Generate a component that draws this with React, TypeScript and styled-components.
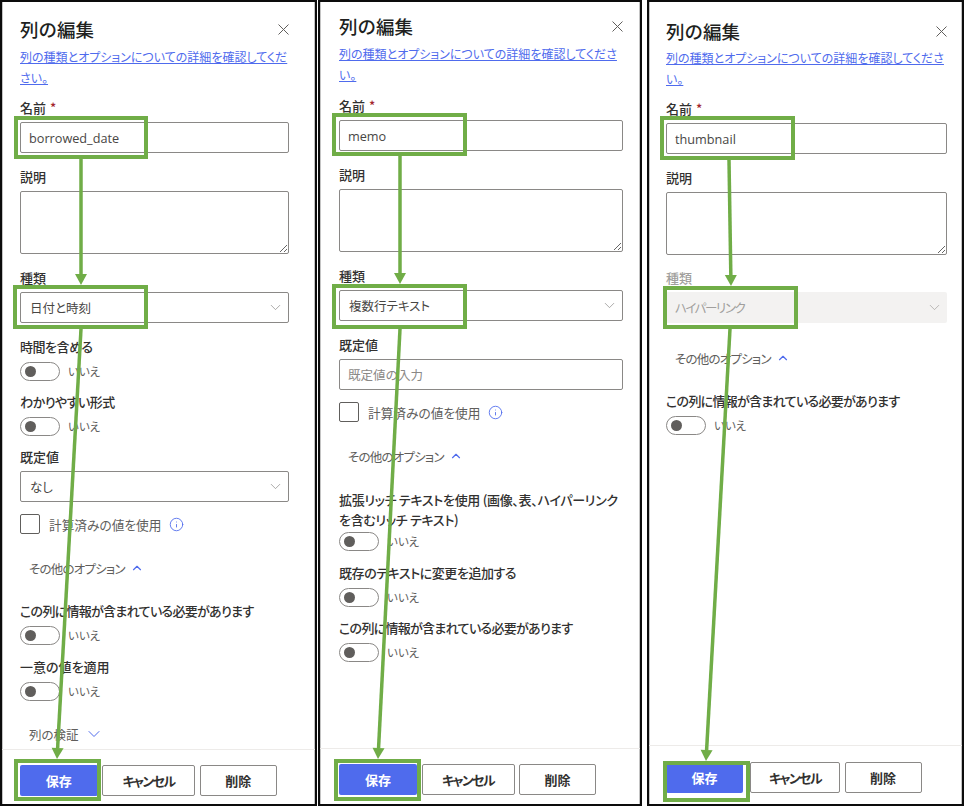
import React from "react";
import styled, { createGlobalStyle } from "styled-components";
import { ChevronDown, ChevronUp, Info } from "lucide-react";

const Global = createGlobalStyle`
  html, body { margin: 0; padding: 0; background: #fff; }
  * { box-sizing: border-box; }
  body {
    font-family: "Noto Sans CJK JP", "Open Sans", sans-serif;
    font-feature-settings: "palt";
    color: #323130;
  }
`;

const Page = styled.div`
  position: relative;
  width: 964px;
  height: 806px;
  display: flex;
  overflow: hidden;
  background: #fff;
`;

const Panel = styled.section<{ $w: number; $gap: number; $pl: number; $pr: number; $pt: number }>`
  width: ${(p) => p.$w}px;
  margin-left: ${(p) => p.$gap}px;
  height: 806px;
  border: 2px solid #0c0c0c;
  box-shadow: inset 1px 0 #c4c4c4, inset -1px 0 #c4c4c4;
  display: flex;
  flex-direction: column;
  padding-top: ${(p) => p.$pt}px;
  --pl: ${(p) => p.$pl}px;
  --pr: ${(p) => p.$pr}px;
`;

const Body = styled.div`
  flex: 1;
  min-height: 0;
  overflow: hidden;
  padding: 0 var(--pr) 0 var(--pl);
`;

const Header = styled.header`
  display: flex;
  align-items: center;
  justify-content: space-between;
  height: 26px;
`;

const Title = styled.h2`
  margin: 0;
  font-size: 18.5px;
  line-height: 26px;
  font-weight: 500;
  color: #201f1e;
  font-feature-settings: normal;
`;

const Close = styled.svg`
  width: 11px;
  height: 11px;
  stroke: #605e5c;
  stroke-width: 1;
  fill: none;
`;

const DocLink = styled.a<{ $mt: number }>`
  display: block;
  margin-top: ${(p) => p.$mt}px;
  font-size: 12px;
  line-height: 20.5px;
  color: #4f6bed;
  text-decoration: underline;
`;

const Label = styled.label<{ $mt?: number; $off?: boolean; $ls?: number }>`
  display: block;
  margin-top: ${(p) => p.$mt ?? 16}px;
  font-size: 13px;
  line-height: 16px;
  font-weight: 500;
  letter-spacing: ${(p) => p.$ls ?? 0}px;
  white-space: nowrap;
  color: ${(p) => (p.$off ? "#a19f9d" : "#323130")};
`;

const TallLabel = styled(Label)`
  line-height: 20px;
`;

const Req = styled.span`
  color: #a4262c;
  margin-left: 4px;
`;

const Input = styled.input`
  display: block;
  width: 100%;
  height: 31px;
  margin-top: 6px;
  padding: 0 8px;
  border: 1.5px solid #8a8886;
  border-radius: 2px;
  background: #fff;
  font-family: "Open Sans", "Noto Sans CJK JP", sans-serif;
  font-size: 12.7px;
  color: #484644;
  outline: none;
  &::placeholder {
    font-family: "Noto Sans CJK JP", sans-serif;
    font-size: 12.5px;
    color: #8a8886;
  }
`;

const Area = styled.textarea`
  display: block;
  width: 100%;
  height: 63px;
  margin: 6px 0 0;
  border: 1.5px solid #8a8886;
  border-radius: 2px;
  background: #fff;
  outline: none;
`;

const Select = styled.div<{ $off?: boolean }>`
  display: flex;
  align-items: center;
  justify-content: space-between;
  height: 31px;
  margin-top: 6px;
  padding: 0 4px 0 9px;
  border: ${(p) => (p.$off ? "none" : "1.5px solid #8a8886")};
  border-radius: 2px;
  background: ${(p) => (p.$off ? "#f3f2f1" : "#fff")};
  font-size: 12.5px;
  letter-spacing: ${(p) => (p.$off ? "-1.4px" : "0")};
  color: ${(p) => (p.$off ? "#a19f9d" : "#484644")};
  svg { color: ${(p) => (p.$off ? "#a19f9d" : "#8a8886")}; }
`;

const ToggleRow = styled.div<{ $mt?: number }>`
  display: flex;
  align-items: center;
  gap: 8px;
  height: 19px;
  margin-top: ${(p) => p.$mt ?? 7}px;
  font-size: 11.5px;
  color: #605e5c;
`;

const ToggleText = styled.span`
  margin-bottom: 2px;
`;

const Track = styled.span`
  display: flex;
  align-items: center;
  width: 40px;
  height: 19px;
  padding-left: 4px;
  border: 1.5px solid #8a8886;
  border-radius: 10px;
  background: #fff;
`;

const Knob = styled.span`
  width: 11px;
  height: 11px;
  border-radius: 50%;
  background: #605e5c;
`;

const CheckRow = styled.div<{ $mt: number }>`
  display: flex;
  align-items: center;
  margin-top: ${(p) => p.$mt}px;
  height: 20px;
  font-size: 12.7px;
  color: #605e5c;
  svg { color: #4f6bed; margin-left: 8px; }
`;

const Box = styled.span`
  width: 20px;
  height: 20px;
  margin-right: 9px;
  border: 1.5px solid #605e5c;
  border-radius: 2px;
`;

const Expander = styled.div<{ $mt: number; $ls?: number }>`
  display: flex;
  align-items: center;
  gap: 5px;
  height: 20px;
  margin-top: ${(p) => p.$mt}px;
  padding-left: 9px;
  font-size: 12.5px;
  letter-spacing: ${(p) => p.$ls ?? 0}px;
  color: #605e5c;
  svg { color: #4f6bed; }
`;

const Footer = styled.footer<{ $pt: number; $h: number }>`
  height: ${(p) => p.$h}px;
  flex: none;
  display: flex;
  gap: 4.5px;
  padding: ${(p) => p.$pt}px 0 0 var(--pl);
  border-top: 1px solid #edebe9;
`;

const Btn = styled.button<{ $w: number; $primary?: boolean; $ls?: number; $ml?: number }>`
  width: ${(p) => p.$w}px;
  height: 31px;
  margin-left: ${(p) => p.$ml ?? 0}px;
  border-radius: 2px;
  border: ${(p) => (p.$primary ? "none" : "1.5px solid #8a8886")};
  background: ${(p) => (p.$primary ? "#4f6bed" : "#fff")};
  color: ${(p) => (p.$primary ? "#fff" : "#323130")};
  font-family: inherit;
  font-feature-settings: "palt";
  font-size: 13px;
  font-weight: 700;
  letter-spacing: ${(p) => p.$ls ?? 0}px;
  padding: 0;
`;

const Overlay = styled.svg`
  position: absolute;
  left: 0;
  top: 0;
  width: 964px;
  height: 806px;
  pointer-events: none;
`;

const Toggle = ({ mt }: { mt?: number }) => (
  <ToggleRow $mt={mt}>
    <Track><Knob /></Track>
    <ToggleText>いいえ</ToggleText>
  </ToggleRow>
);

const Head = () => (
  <Header>
    <Title>列の編集</Title>
    <Close viewBox="0 0 11 11"><path d="M.5.5l10 10M10.5.5l-10 10" /></Close>
  </Header>
);

const Chev = () => <ChevronDown size={17} strokeWidth={1} />;
const Down = () => <ChevronDown size={20} strokeWidth={1.2} />;
const Up = () => <ChevronUp size={14} strokeWidth={2} />;
const LinkText = "列の種類とオプションについての詳細を確認してください。";

const Boxes: [number, number, number, number][] = [
  [16, 118, 130, 39], [15, 287, 131, 40], [16, 761, 83, 38],
  [334, 115, 131, 39], [334, 286, 131, 41], [336, 761, 83, 38],
  [662, 118, 131, 40], [665, 288, 131, 39], [665, 763, 83, 37],
];
const Lines: [number, number, number, number][] = [
  [81, 159, 81, 285], [81, 329, 57, 759],
  [400, 156, 400, 284], [400, 329, 378, 759],
  [729, 160, 731, 286], [730, 329, 706, 761],
];

export default function App() {
  return (
    <Page>
      <Global />
      <Panel $w={317} $gap={0} $pl={18} $pr={26} $pt={14}>
        <Body>
          <Head />
          <DocLink $mt={5}>{LinkText}</DocLink>
          <Label $mt={12}>名前<Req>*</Req></Label>
          <Input defaultValue="borrowed_date" />
          <Label>説明</Label>
          <Area />
          <Label>種類</Label>
          <Select>日付と時刻<Chev /></Select>
          <Label $ls={-0.5}>時間を含める</Label>
          <Toggle />
          <Label $mt={13} $ls={-0.5}>わかりやすい形式</Label>
          <Toggle />
          <Label $mt={13}>既定値</Label>
          <Select>なし<Chev /></Select>
          <CheckRow $mt={12}><Box />計算済みの値を使用<Info size={15} strokeWidth={1.4} /></CheckRow>
          <Expander $mt={24} $ls={-0.8}>その他のオプション<Up /></Expander>
          <Label $mt={25} $ls={-0.7}>この列に情報が含まれている必要があります</Label>
          <Toggle />
          <Label $mt={14}>一意の値を適用</Label>
          <Toggle />
          <Expander $mt={23}>列の検証<Down /></Expander>
        </Body>
        <Footer $pt={15} $h={55}>
          <Btn $primary $w={77.5}>保存</Btn>
          <Btn $w={93} $ls={-1.6}>キャンセル</Btn>
          <Btn $w={77.5}>削除</Btn>
        </Footer>
      </Panel>

      <Panel $w={324} $gap={1} $pl={19} $pr={17} $pt={11}>
        <Body>
          <Head />
          <DocLink $mt={5}>{LinkText}</DocLink>
          <Label $mt={13}>名前<Req>*</Req></Label>
          <Input defaultValue="memo" />
          <Label>説明</Label>
          <Area />
          <Label>種類</Label>
          <Select>複数行テキスト<Chev /></Select>
          <Label>既定値</Label>
          <Input placeholder="既定値の入力" />
          <CheckRow $mt={12}><Box />計算済みの値を使用<Info size={15} strokeWidth={1.4} /></CheckRow>
          <Expander $mt={24} $ls={-0.8}>その他のオプション<Up /></Expander>
          <TallLabel $mt={24} $ls={-0.3}>拡張リッチ テキストを使用 (画像、表、ハイパーリンク<br />を含むリッチ テキスト)</TallLabel>
          <Toggle mt={2} />
          <Label $mt={14} $ls={-0.45}>既存のテキストに変更を追加する</Label>
          <Toggle />
          <Label $mt={13} $ls={-0.7}>この列に情報が含まれている必要があります</Label>
          <Toggle />
        </Body>
        <Footer $pt={15} $h={56}>
          <Btn $primary $w={78}>保存</Btn>
          <Btn $w={93} $ls={-1.6}>キャンセル</Btn>
          <Btn $w={77}>削除</Btn>
        </Footer>
      </Panel>

      <Panel $w={317} $gap={5} $pl={17} $pr={15} $pt={16}>
        <Body>
          <Head />
          <DocLink $mt={4}>{LinkText}</DocLink>
          <Label $mt={12}>名前<Req>*</Req></Label>
          <Input defaultValue="thumbnail" />
          <Label>説明</Label>
          <Area />
          <Label $mt={15} $off>種類</Label>
          <Select $off>ハイパーリンク<Chev /></Select>
          <Expander $mt={25} $ls={-0.8}>その他のオプション<Up /></Expander>
          <Label $mt={25} $ls={-0.7}>この列に情報が含まれている必要があります</Label>
          <Toggle />
        </Body>
        <Footer $pt={16} $h={59}>
          <Btn $primary $w={77}>保存</Btn>
          <Btn $w={90} $ls={-1.6} $ml={2.5}>キャンセル</Btn>
          <Btn $w={77}>削除</Btn>
        </Footer>
      </Panel>

      <Overlay viewBox="0 0 964 806">
        {Boxes.map(([x, y, w, h]) => (
          <rect key={`${x}-${y}`} x={x} y={y} width={w} height={h} fill="none" stroke="#70ad47" strokeWidth={4} />
        ))}
        {Lines.map(([x1, y1, x2, y2]) => {
          const len = Math.hypot(x2 - x1, y2 - y1);
          const ux = (x2 - x1) / len;
          const uy = (y2 - y1) / len;
          const bx = x2 - ux * 11;
          const by = y2 - uy * 11;
          return (
            <g key={`${x1}-${y1}`} fill="#70ad47" stroke="none">
              <line x1={x1} y1={y1} x2={bx} y2={by} stroke="#70ad47" strokeWidth={3.5} />
              <polygon points={`${x2},${y2} ${bx - uy * 6},${by + ux * 6} ${bx + uy * 6},${by - ux * 6}`} />
            </g>
          );
        })}
      </Overlay>
    </Page>
  );
}
